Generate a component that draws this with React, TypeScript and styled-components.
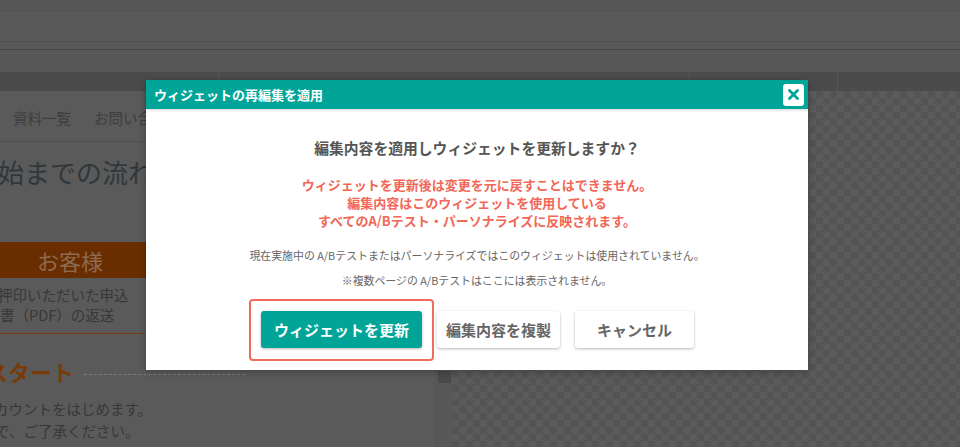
import React from "react";
import styled, { createGlobalStyle } from "styled-components";

const Global = createGlobalStyle`
  html, body { margin: 0; padding: 0; }
  body {
    width: 960px; height: 447px; overflow: hidden;
    font-family: "Noto Sans CJK JP", "Noto Sans", sans-serif;
    background: #595959;
  }
`;

const Screen = styled.div`
  position: relative;
  width: 960px;
  height: 447px;
  display: flex;
  flex-direction: column;
  overflow: hidden;
  background: #595959;
`;

const Strip = styled.div<{ $h: number; $bg: string; $line?: string }>`
  height: ${(p) => p.$h}px;
  background: ${(p) => p.$bg};
  border-bottom: ${(p) => (p.$line ? `1px solid ${p.$line}` : "none")};
  flex-shrink: 0;
`;

const TabBand = styled.div`
  height: 19px;
  background: #4b4b4b;
  display: flex;
  flex-shrink: 0;
`;

const TabCell = styled.div<{ $w?: number }>`
  ${(p) => (p.$w ? `width: ${p.$w}px;` : "flex: 1;")}
  border-right: 1px solid #555555;
  &:last-child { border-right: none; }
`;

const Main = styled.div`
  flex: 1;
  display: flex;
  min-height: 0;
`;

const Page = styled.div`
  width: 435px;
  background: #5a5a5a;
  overflow: hidden;
  display: flex;
  flex-direction: column;
`;

const Nav = styled.div`
  height: 51px;
  flex-shrink: 0;
  border-bottom: 1px solid #4f4f4f;
  display: flex;
  align-items: center;
  gap: 23px;
  padding-left: 13px;
  padding-top: 2px;
  box-sizing: border-box;
  font-size: 14.5px;
  color: #3e3e3e;
  white-space: nowrap;
`;

const Heading = styled.div`
  margin-top: 12px;
  margin-left: -106px;
  font-size: 26px;
  line-height: 36px;
  color: #30373b;
  white-space: nowrap;
  flex-shrink: 0;
`;

const Band = styled.div`
  margin-top: 52px;
  margin-left: -60px;
  width: 260px;
  height: 36px;
  flex-shrink: 0;
  background: #6a2d00;
  color: #8e6a50;
  font-size: 22px;
  line-height: 36px;
  text-align: center;
`;

const Lines = styled.div<{ $indent: number; $gap?: number }>`
  margin-left: ${(p) => p.$indent}px;
  margin-top: ${(p) => p.$gap ?? 0}px;
  font-size: 14.5px;
  line-height: 20px;
  height: 20px;
  flex-shrink: 0;
  color: #383838;
  white-space: nowrap;
`;

const Rule = styled.div`
  margin-top: 8px;
  width: 100%;
  height: 1px;
  flex-shrink: 0;
  background: #7a3b10;
`;

const StartRow = styled.div`
  margin-top: 22px;
  height: 30px;
  flex-shrink: 0;
  display: flex;
  align-items: center;
  gap: 10px;
  margin-left: -14px;
`;

const StartText = styled.div`
  font-size: 22px;
  line-height: 30px;
  font-weight: 700;
  color: #7a3a08;
  white-space: nowrap;
`;

const Dashed = styled.div`
  width: 161px;
  border-top: 1px dashed #7c7c7c;
  margin-top: 6px;
`;

const Small = styled.div<{ $indent: number; $gap?: number }>`
  margin-left: ${(p) => p.$indent}px;
  margin-top: ${(p) => p.$gap ?? 0}px;
  font-size: 14.5px;
  line-height: 22px;
  height: 22px;
  flex-shrink: 0;
  color: #383838;
  white-space: nowrap;
`;

const ScrollCol = styled.div`
  width: 17px;
  background: #585858;
  border-left: 1px solid #535353;
  box-sizing: border-box;
  display: flex;
  flex-direction: column;
  align-items: center;
`;

const Thumb = styled.div`
  margin-top: 280px;
  width: 13px;
  height: 12px;
  background: #4a4a4a;
`;

const Canvas = styled.div`
  flex: 1;
  background: repeating-conic-gradient(#5b5b5b 0 25%, #545454 0 50%) 0 0 / 14px 14px;
`;

const Modal = styled.div`
  position: absolute;
  left: 146px;
  top: 80px;
  width: 662px;
  background: #ffffff;
  box-shadow: 0 2px 8px rgba(0, 0, 0, 0.25);
  display: flex;
  flex-direction: column;
`;

const Header = styled.div`
  height: 29px;
  background: #00a598;
  display: flex;
  align-items: center;
  justify-content: space-between;
  padding: 0 4px 0 8px;
  box-shadow: 0 1px 3px rgba(0, 0, 0, 0.18);
  position: relative;
  z-index: 1;
`;

const HeaderTitle = styled.div`
  color: #ffffff;
  font-size: 13px;
  font-weight: 700;
  line-height: 16px;
`;

const CloseBtn = styled.button`
  width: 21px;
  height: 22px;
  border: none;
  border-radius: 3px;
  background: #ffffff;
  padding: 0;
  display: flex;
  align-items: center;
  justify-content: center;
`;

const Body = styled.div`
  padding: 29px 20px 9px;
  display: flex;
  flex-direction: column;
  align-items: center;
  text-align: center;
`;

const Question = styled.div`
  font-size: 14.8px;
  line-height: 20px;
  font-weight: 700;
  color: #555555;
`;

const Warning = styled.div`
  margin-top: 18px;
  font-size: 13px;
  line-height: 18px;
  font-weight: 700;
  color: #f26757;
`;

const Note = styled.div<{ $gap: number }>`
  margin-top: ${(p) => p.$gap}px;
  font-size: 10.9px;
  line-height: 16px;
  color: #666666;
  white-space: nowrap;
`;

const Buttons = styled.div`
  margin-top: 23px;
  margin-bottom: 13px;
  display: flex;
  gap: 15px;
  justify-content: center;
  padding-left: 1px;
`;

const Highlight = styled.div`
  position: relative;
  display: flex;
  &::after {
    content: "";
    position: absolute;
    left: -12px;
    right: -12px;
    top: -12px;
    bottom: -13px;
    border: 2px solid #f26b5f;
    border-radius: 4px;
    pointer-events: none;
  }
`;

const Btn = styled.button<{ $primary?: boolean; $w: number }>`
  width: ${(p) => p.$w}px;
  height: 37px;
  border-radius: 3px;
  border: none;
  font-family: inherit;
  font-size: 15px;
  font-weight: 700;
  padding: 0;
  cursor: pointer;
  background: ${(p) => (p.$primary ? "#00a598" : "#ffffff")};
  color: ${(p) => (p.$primary ? "#ffffff" : "#666666")};
  box-shadow: 0 1px 3px rgba(0, 0, 0, 0.28);
`;

export default function App() {
  return (
    <>
      <Global />
      <Screen>
        <Strip $h={12} $bg="#565656" $line="#5d5d5d" />
        <Strip $h={28} $bg="#595959" $line="#505050" />
        <Strip $h={7} $bg="#595959" $line="#474747" />
        <Strip $h={22} $bg="#575757" />
        <TabBand>
          <TabCell $w={218} />
          <TabCell $w={470} />
          <TabCell $w={147} />
          <TabCell />
        </TabBand>
        <Main>
          <Page>
            <Nav>
              <span>資料一覧</span>
              <span>お問い合わせ</span>
            </Nav>
            <Heading>ご利用開始までの流れ</Heading>
            <Band>お客様</Band>
            <Lines $indent={-2} $gap={7}>
              押印いただいた申込
            </Lines>
            <Lines $indent={0}>書（PDF）の返送</Lines>
            <Rule />
            <StartRow>
              <StartText>スタート</StartText>
              <Dashed />
            </StartRow>
            <Small $indent={-6} $gap={12}>
              カウントをはじめます。
            </Small>
            <Small $indent={-5}>で、ご了承ください。</Small>
          </Page>
          <ScrollCol>
            <Thumb />
          </ScrollCol>
          <Canvas />
        </Main>
        <Modal>
          <Header>
            <HeaderTitle>ウィジェットの再編集を適用</HeaderTitle>
            <CloseBtn aria-label="close">
              <svg width="11" height="11" viewBox="0 0 11 11">
                <path
                  d="M1.5 1.5 L9.5 9.5 M9.5 1.5 L1.5 9.5"
                  stroke="#00a598"
                  strokeWidth="2.8"
                  strokeLinecap="round"
                />
              </svg>
            </CloseBtn>
          </Header>
          <Body>
            <Question>編集内容を適用しウィジェットを更新しますか？</Question>
            <Warning>
              ウィジェットを更新後は変更を元に戻すことはできません。
              <br />
              編集内容はこのウィジェットを使用している
              <br />
              すべてのA/Bテスト・パーソナライズに反映されます。
            </Warning>
            <Note $gap={17}>
              現在実施中の A/Bテストまたはパーソナライズではこのウィジェットは使用されていません。
            </Note>
            <Note $gap={9}>※複数ページの A/Bテストはここには表示されません。</Note>
            <Buttons>
              <Highlight>
                <Btn $primary $w={161}>ウィジェットを更新</Btn>
              </Highlight>
              <Btn $w={123}>編集内容を複製</Btn>
              <Btn $w={119}>キャンセル</Btn>
            </Buttons>
          </Body>
        </Modal>
      </Screen>
    </>
  );
}
